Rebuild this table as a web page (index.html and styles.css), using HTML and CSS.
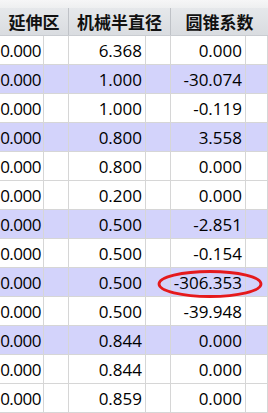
FILE: index.html
```html
<!DOCTYPE html>
<html>
<head>
<meta charset="utf-8">
<link rel="stylesheet" href="styles.css">
</head>
<body>
<div class="sheet">
  <div class="topstrip"></div>
  <div class="head">
    <div class="hcell">延伸区</div>
    <div class="hcell">机械半直径</div>
    <div class="hcell last">圆锥系数</div>
  </div>
  <div class="rows">
    <div class="row"><div class="c a">0.000</div><div class="c e"></div><div class="c b">6.368</div><div class="c e"></div><div class="c d">0.000</div><div class="c e"></div></div>
    <div class="row sel"><div class="c a">0.000</div><div class="c e"></div><div class="c b">1.000</div><div class="c e"></div><div class="c d">-30.074</div><div class="c e"></div></div>
    <div class="row"><div class="c a">0.000</div><div class="c e"></div><div class="c b">1.000</div><div class="c e"></div><div class="c d">-0.119</div><div class="c e"></div></div>
    <div class="row sel"><div class="c a">0.000</div><div class="c e"></div><div class="c b">0.800</div><div class="c e"></div><div class="c d">3.558</div><div class="c e"></div></div>
    <div class="row"><div class="c a">0.000</div><div class="c e"></div><div class="c b">0.800</div><div class="c e"></div><div class="c d">0.000</div><div class="c e"></div></div>
    <div class="row"><div class="c a">0.000</div><div class="c e"></div><div class="c b">0.200</div><div class="c e"></div><div class="c d">0.000</div><div class="c e"></div></div>
    <div class="row sel"><div class="c a">0.000</div><div class="c e"></div><div class="c b">0.500</div><div class="c e"></div><div class="c d">-2.851</div><div class="c e"></div></div>
    <div class="row"><div class="c a">0.000</div><div class="c e"></div><div class="c b">0.500</div><div class="c e"></div><div class="c d">-0.154</div><div class="c e"></div></div>
    <div class="row sel"><div class="c a">0.000</div><div class="c e"></div><div class="c b">0.500</div><div class="c e"></div><div class="c d">-306.353</div><div class="c e"></div></div>
    <div class="row"><div class="c a">0.000</div><div class="c e"></div><div class="c b">0.500</div><div class="c e"></div><div class="c d">-39.948</div><div class="c e"></div></div>
    <div class="row sel"><div class="c a">0.000</div><div class="c e"></div><div class="c b">0.844</div><div class="c e"></div><div class="c d">0.000</div><div class="c e"></div></div>
    <div class="row"><div class="c a">0.000</div><div class="c e"></div><div class="c b">0.844</div><div class="c e"></div><div class="c d">0.000</div><div class="c e"></div></div>
    <div class="row"><div class="c a">0.000</div><div class="c e"></div><div class="c b">0.859</div><div class="c e"></div><div class="c d">0.000</div><div class="c e"></div></div>
  </div>
  <svg class="mark" width="110" height="32" viewBox="0 0 110 32">
    <ellipse cx="55" cy="16" rx="51" ry="12.5" fill="none" stroke="#e5191c" stroke-width="2.8"/>
  </svg>
</div>
</body>
</html>
```
FILE: styles.css
```css
html, body {
  margin: 0;
  padding: 0;
  background: #ffffff;
}
.sheet {
  position: relative;
  width: 268px;
  height: 413px;
  overflow: hidden;
  background: #ffffff;
}
.topstrip {
  height: 8px;
  background: linear-gradient(to bottom, #f6f6f7, #eeeff0);
}
.head {
  display: grid;
  grid-template-columns: 69px 102px 97px;
  height: 28px;
  background: linear-gradient(to bottom, #e6e8eb, #d9dce0);
  box-sizing: border-box;
  border-bottom: 1px solid #c9ccd1;
}
.hcell {
  display: flex;
  align-items: center;
  justify-content: center;
  font-family: "Noto Sans CJK SC", sans-serif;
  font-weight: 700;
  font-size: 17px;
  color: #111;
  border-right: 1px solid #bfc2c7;
  padding-bottom: 1px;
}
.hcell.last {
  border-right: none;
}
.rows {
  display: flex;
  flex-direction: column;
}
.row {
  display: grid;
  grid-template-columns: 44px 25px 77px 25px 75px 22px;
  height: 29px;
  background: #ffffff;
}
.row.sel {
  background: #d3d3fb;
}
.c {
  box-sizing: border-box;
  border-right: 1px solid #d6d6d6;
  border-bottom: 1px solid #d6d6d6;
  display: flex;
  align-items: center;
  justify-content: flex-end;
  padding-right: 3px;
  font-family: "Open Sans", sans-serif;
  font-size: 17px;
  color: #000;
  white-space: nowrap;
}
.c.a {
  padding-right: 2px;
  letter-spacing: -0.5px;
}
.mark {
  position: absolute;
  left: 155px;
  top: 268px;
}
```
